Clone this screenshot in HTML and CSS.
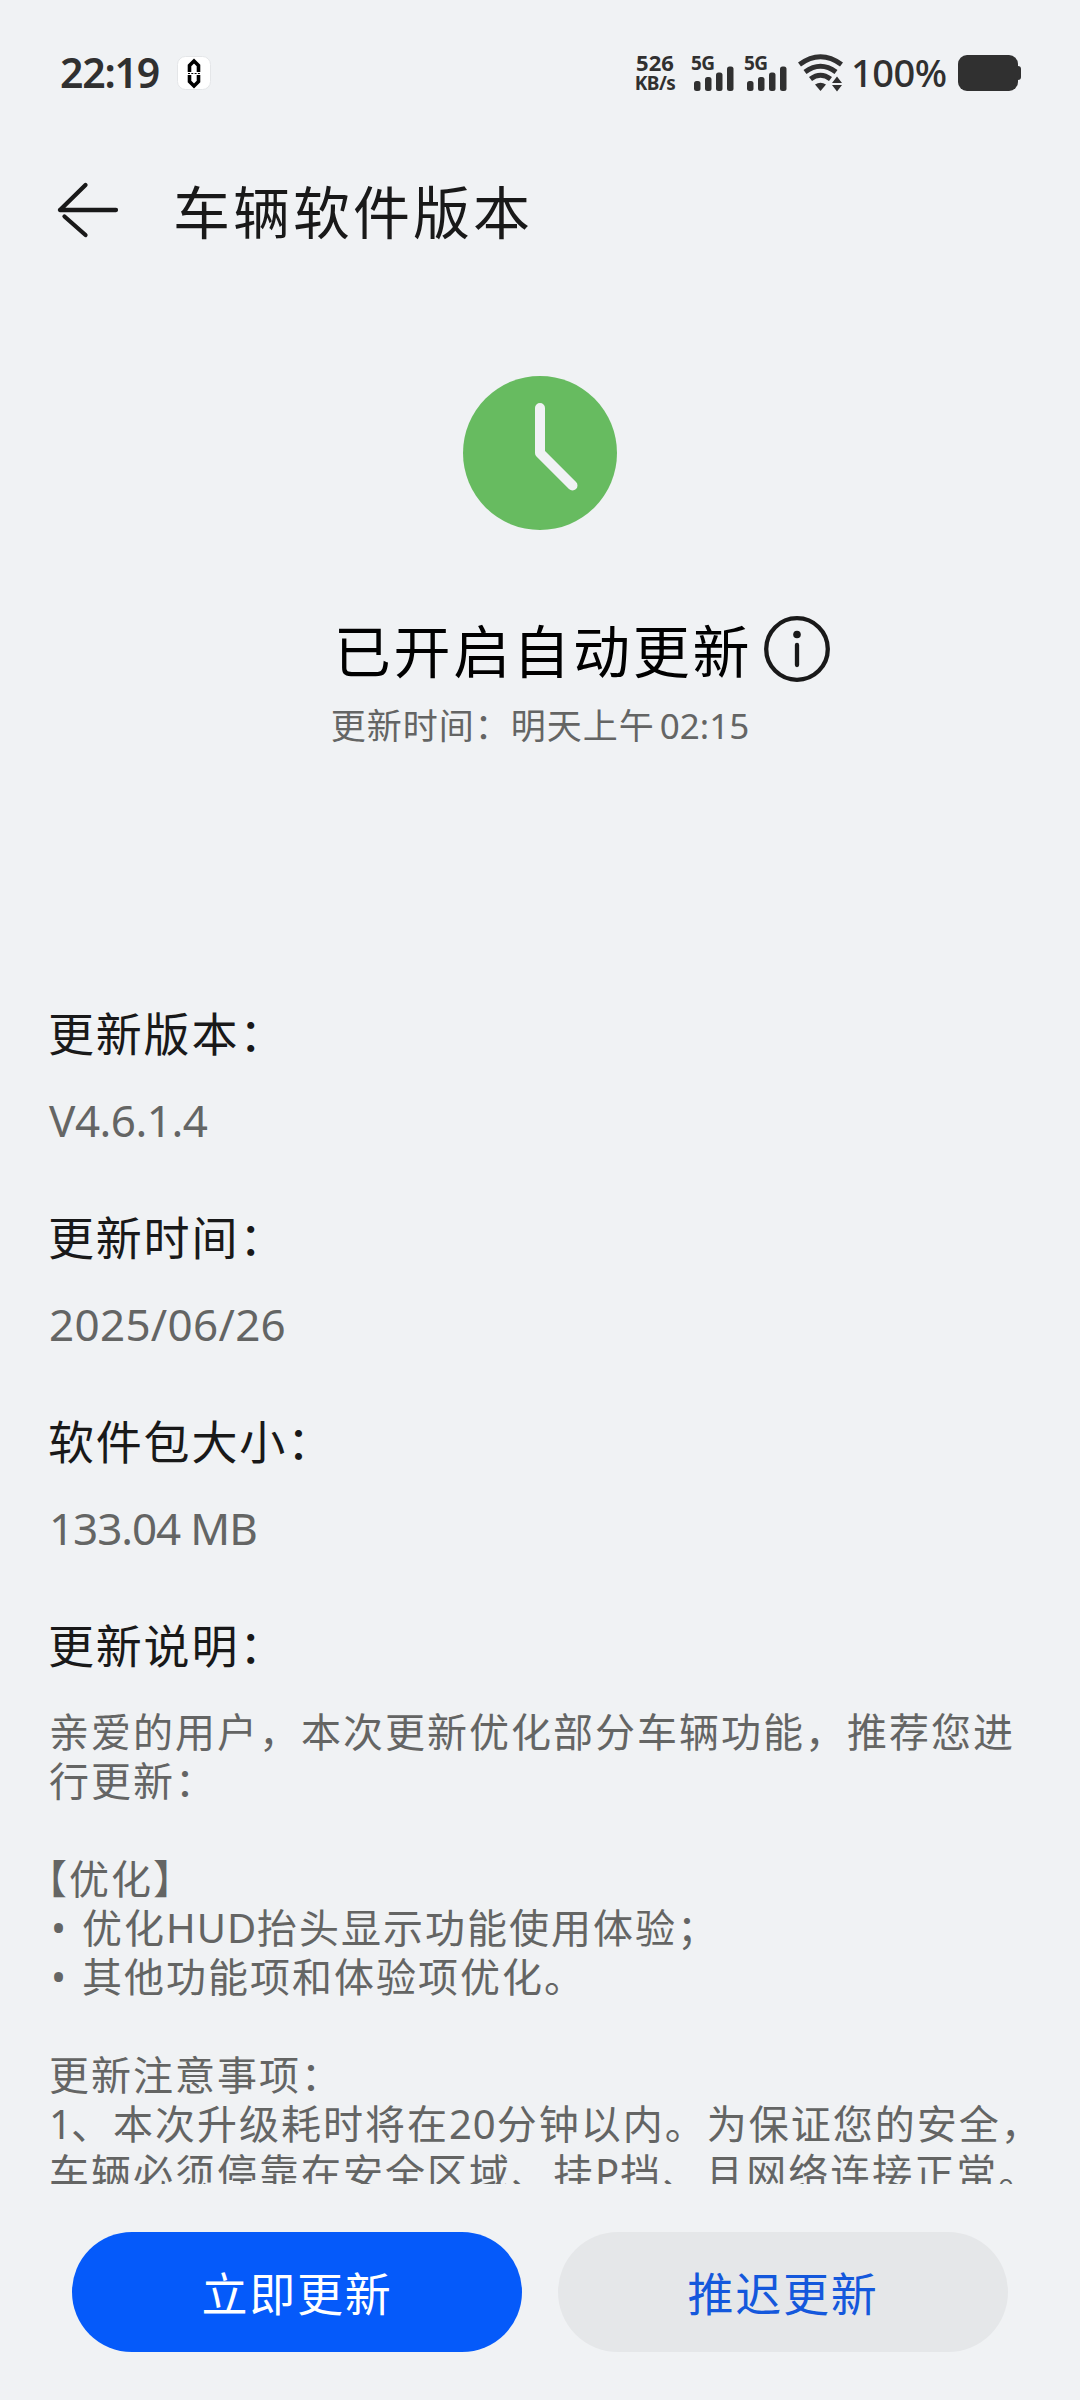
FILE: index.html
```html
<!DOCTYPE html>
<html lang="zh-CN">
<head>
  <meta charset="UTF-8" />
  <meta name="viewport" content="width=device-width, initial-scale=1.0"/>
  <title>车辆软件版本</title>
  <link rel="stylesheet" href="styles.css">
</head>
<body>
  <div class="status-bar">
    <span class="clock">22:19</span>
    <svg class="app-badge" width="34" height="34" viewBox="0 0 34 34">
      <rect x="0.5" y="0.5" width="33" height="33" rx="8" fill="#fff" stroke="#e4e6e8"/>
      <path d="M12.5 16V9.500L17 5l4.500 4.500V16M12.500 19v6.500L17 30l4.500-4.500V19" fill="none" stroke="#000" stroke-width="3.600"/>
      <path d="M11 17.500h12" stroke="#000" stroke-width="1" stroke-dasharray="2 1.300"/>
    </svg>
    <div class="speed"><span>526</span><span>KB/s</span></div>
    <div class="signal">
      <span>5G</span>
      <svg width="42" height="26" viewBox="0 0 42 26" fill="#303030">
        <rect x="1" y="15" width="6.500" height="10" rx="2.500"/>
        <rect x="12" y="11" width="6.500" height="14" rx="2.500"/>
        <rect x="23" y="6.500" width="6.500" height="18.500" rx="2.500"/>
        <rect x="34" y="0.500" width="6.500" height="24.500" rx="2.500"/>
      </svg>
    </div>
    <div class="signal">
      <span>5G</span>
      <svg width="42" height="26" viewBox="0 0 42 26" fill="#303030">
        <rect x="1" y="15" width="6.500" height="10" rx="2.500"/>
        <rect x="12" y="11" width="6.500" height="14" rx="2.500"/>
        <rect x="23" y="6.500" width="6.500" height="18.500" rx="2.500"/>
        <rect x="34" y="0.500" width="6.500" height="24.500" rx="2.500"/>
      </svg>
    </div>
    <svg class="wifi" width="46" height="38" viewBox="0 0 46 38">
      <g fill="none" stroke="#303030" stroke-width="5">
        <path d="M1.500 10.500Q22.500-5 43.500 10.500"/>
        <path d="M7 18Q22.500 6.500 38 18"/>
        <path d="M12.500 25Q22.500 17.500 32.500 25"/>
      </g>
      <path d="M17 30.500Q22.500 27 28 30.500L22.500 37Z" fill="#303030"/>
      <path d="M34 29l5-6.500 5 6.500zM34 31h10l-5 6.500z" fill="#303030"/>
    </svg>
    <span class="percent">100%</span>
    <svg class="battery" width="64" height="38" viewBox="0 0 64 38" fill="#303030">
      <rect x="0" y="1" width="60" height="36" rx="9"/>
      <rect x="56" y="12" width="7" height="14" rx="3"/>
    </svg>
  </div>

  <header class="header">
    <svg class="back" width="64" height="60" viewBox="0 0 64 60" fill="none" stroke="#191919" stroke-width="4.300" stroke-linecap="round">
      <path d="M4 30H60M4 30L29.500 5M8.500 36.500L29.500 55"/>
    </svg>
    <h1>车辆软件版本</h1>
  </header>

  <section class="hero">
    <svg class="hero-icon" width="154" height="154" viewBox="0 0 154 154">
      <circle cx="77" cy="77" r="77" fill="#67bb60"/>
      <path d="M77 32v45l32.500 32.500" fill="none" stroke="#f0f2f4" stroke-width="10" stroke-linecap="round" stroke-linejoin="round"/>
    </svg>
    <div class="hero-title">
      <h2>已开启自动更新</h2>
      <svg class="info" width="66" height="66" viewBox="0 0 66 66">
        <circle cx="33" cy="33" r="30.800" fill="none" stroke="#191919" stroke-width="4.300"/>
        <circle cx="33" cy="18.500" r="3.800" fill="#191919"/>
        <path d="M33 29v20" stroke="#191919" stroke-width="4.300" stroke-linecap="round"/>
      </svg>
    </div>
    <p class="hero-time">更新时间：明天上午<span>02:15</span></p>
  </section>

  <main class="details">
    <h3>更新版本：</h3>
    <p class="value version">V4.6.1.4</p>
    <h3>更新时间：</h3>
    <p class="value date">2025/06/26</p>
    <h3>软件包大小：</h3>
    <p class="value size">133.04 MB</p>
    <h3>更新说明：</h3>
    <div class="notes">
      <p>亲爱的用户，本次更新优化部分车辆功能，推荐您进<br>行更新：</p>
      <p><span class="bracket-open">【</span>优化】<br><span class="dot">•</span>优化<span class="latin">HUD</span>抬头显示功能使用体验；<br><span class="dot">•</span>其他功能项和体验项优化。</p>
      <p>更新注意事项：<br><span class="index">1</span>、本次升级耗时将在<span class="latin">20</span>分钟以内。为保证您的安全，<br>车辆必须停靠在安全区域、挂<span class="latin">P</span>挡、且网络连接正常。</p>
    </div>
  </main>

  <footer class="actions">
    <button class="btn primary">立即更新</button>
    <button class="btn secondary">推迟更新</button>
  </footer>
</body>
</html>
```
FILE: styles.css
```css
* {
  box-sizing: border-box;
  margin: 0;
  padding: 0;
}

body {
  width: 1080px;
  height: 2400px;
  display: flex;
  flex-direction: column;
  overflow: hidden;
  background-color: #f0f2f4;
  color: #191919;
  font-family: "Noto Sans", "Noto Sans CJK SC", sans-serif;
}

h1, h2, h3 {
  font-weight: 400;
  white-space: nowrap;
}

svg {
  display: block;
  flex-shrink: 0;
}

/* Status bar */
.status-bar {
  height: 146px;
  padding: 0 58px 0 60px;
  display: flex;
  align-items: center;
  color: #303030;
  white-space: nowrap;
}

.clock {
  width: 117px;
  margin-top: -2px;
  font-size: 41px;
  font-weight: 600;
  line-height: 60px;
  letter-spacing: -1.2px;
}

.speed {
  width: 46px;
  margin-left: 421px;
  display: flex;
  flex-direction: column;
  align-items: center;
  font-weight: 700;
}

.speed span {
  font-size: 22px;
  line-height: 21px;
}

.speed span:last-child {
  font-size: 19px;
  letter-spacing: -0.5px;
}

.signal {
  width: 42px;
  height: 38px;
  margin-left: 15px;
  position: relative;
  display: flex;
  align-items: flex-end;
}

.signal + .signal {
  margin-left: 11px;
}

.signal span {
  position: absolute;
  left: -2px;
  top: 0;
  font-size: 19px;
  font-weight: 700;
  line-height: 18px;
  letter-spacing: -0.5px;
}

.wifi {
  margin-left: 10px;
}

.percent {
  width: 104px;
  margin-left: 7px;
  margin-top: -2px;
  font-size: 38px;
  font-weight: 500;
  line-height: 60px;
  letter-spacing: -0.5px;
}

.battery {
  margin-left: auto;
}

/* Title bar */
.header {
  height: 132px;
  padding-left: 56px;
  display: flex;
  align-items: center;
}

.back {
  margin-top: -4px;
}

.header h1 {
  margin-left: 53px;
  font-size: 57px;
  line-height: 80px;
  letter-spacing: 3px;
}

/* Update state */
.hero {
  height: 715px;
  padding-top: 98px;
  display: flex;
  flex-direction: column;
  align-items: center;
}

.hero-title {
  margin-top: 81px;
  padding-left: 84px;
  display: flex;
  align-items: center;
  color: #000;
}

.hero-title h2 {
  font-size: 57px;
  line-height: 80px;
  letter-spacing: 2.8px;
}

.info {
  margin-left: 12px;
  margin-bottom: 4px;
}

.hero-time {
  margin-top: 10px;
  font-size: 35px;
  line-height: 50px;
  letter-spacing: 1px;
  color: #646564;
}

.hero-time span {
  margin-left: 5px;
  letter-spacing: 0;
}

/* Version details */
.details {
  height: 1191px;
  padding: 10px 48px 0 49px;
  overflow: hidden;
}

.details h3 {
  height: 60px;
  margin-left: -1px;
  font-size: 46px;
  line-height: 60px;
  letter-spacing: 1.8px;
}

.value {
  height: 60px;
  margin: 26px 0 58px;
  font-size: 44px;
  line-height: 62px;
  color: #646564;
}

.version {
  letter-spacing: -0.5px;
}

.date {
  letter-spacing: 0.3px;
}

.size {
  letter-spacing: -1.1px;
}

.notes {
  margin-top: 32px;
  font-size: 40px;
  line-height: 49px;
  letter-spacing: 2px;
  color: #646564;
  white-space: nowrap;
}

.notes p {
  margin-bottom: 49px;
}

.latin {
  letter-spacing: 1px;
}

.index {
  letter-spacing: -1px;
}

.dot {
  display: inline-block;
  width: 33px;
  padding-left: 2px;
}

.bracket-open {
  margin-left: -22px;
}

/* Bottom buttons */
.actions {
  height: 216px;
  padding: 48px 72px;
  display: flex;
  gap: 36px;
}

.btn {
  flex: 1;
  height: 120px;
  padding-bottom: 3px;
  border: none;
  border-radius: 60px;
  font-family: inherit;
  font-size: 46px;
  letter-spacing: 1.8px;
}

.primary {
  background-color: #055afa;
  color: #fff;
}

.secondary {
  background-color: #e5e7e9;
  color: #1458dc;
}
```
